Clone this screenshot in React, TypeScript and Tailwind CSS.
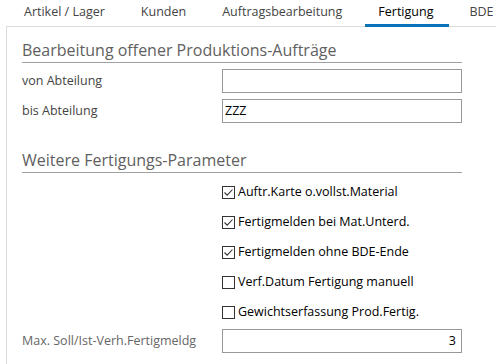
const tabs = ["Artikel / Lager", "Kunden", "Auftragsbearbeitung", "Fertigung", "BDE"];

const checks = [
  { label: "Auftr.Karte o.vollst.Material", checked: true },
  { label: "Fertigmelden bei Mat.Unterd.", checked: true },
  { label: "Fertigmelden ohne BDE-Ende", checked: true },
  { label: "Verf.Datum Fertigung manuell", checked: false },
  { label: "Gewichtserfassung Prod.Fertig.", checked: false },
];

function CheckBox({ checked }: { checked: boolean }) {
  return (
    <span className="flex h-[13px] w-[13px] shrink-0 items-center justify-center border border-[#333] bg-white">
      {checked && (
        <svg width="11" height="11" viewBox="0 0 11 11">
          <path d="M1.5 5.5 L4.2 8.2 L9.5 2.5" fill="none" stroke="#333" strokeWidth="1.1" />
        </svg>
      )}
    </span>
  );
}

function Section({ title }: { title: string }) {
  return (
    <div className="mr-[34px] border-b border-[#a0a0a0] text-[16px] leading-[24px] text-[#5f5f5f]">
      {title}
    </div>
  );
}

export default function App() {
  return (
    <div className="h-[364px] w-[496px] overflow-hidden bg-white font-['Segoe_UI','Open_Sans',sans-serif] text-[12.5px] text-[#222]">
      {/* Tab bar */}
      <div className="ml-[6px] flex h-[27px] border-b border-[#dcdcdc]">
        {tabs.map((t) => (
          <div key={t} className="relative flex items-center whitespace-nowrap px-[18px] pb-[2px]">
            <span className={t === "Fertigung" ? "text-black" : "text-[#444]"}>{t}</span>
            {t === "Fertigung" && (
              <span className="absolute bottom-[-1px] left-[5px] right-[2px] h-[3px] bg-[#0a72b8]" />
            )}
          </div>
        ))}
      </div>

      {/* Panel */}
      <div className="ml-[6px] h-[337px] border-l border-[#dcdcdc] pl-[15px] pt-[11px]">
        <Section title="Bearbeitung offener Produktions-Aufträge" />

        <div className="mt-[6px] flex flex-col gap-[6px]">
          <div className="flex items-center">
            <span className="w-[200px] text-[#444]">von Abteilung</span>
            <div className="h-[24px] w-[240px] border border-[#999]" />
          </div>
          <div className="flex items-center">
            <span className="w-[200px] text-[#444]">bis Abteilung</span>
            <div className="flex h-[24px] w-[240px] items-center border border-[#999] px-[2px] text-black">ZZZ</div>
          </div>
        </div>

        <div className="mt-[25px]">
          <Section title="Weitere Fertigungs-Parameter" />
        </div>

        <div className="ml-[200px] mt-[4px] flex flex-col">
          {checks.map((c) => (
            <div key={c.label} className="flex h-[30px] items-center gap-[3px] text-black">
              <CheckBox checked={c.checked} />
              <span>{c.label}</span>
            </div>
          ))}
        </div>

        <div className="mt-[2px] flex items-center">
          <span className="w-[200px] text-[#666]">Max. Soll/Ist-Verh.Fertigmeldg</span>
          <div className="flex h-[24px] w-[240px] items-center justify-end border border-[#999] px-[5px] text-black">3</div>
        </div>
      </div>
    </div>
  );
}
